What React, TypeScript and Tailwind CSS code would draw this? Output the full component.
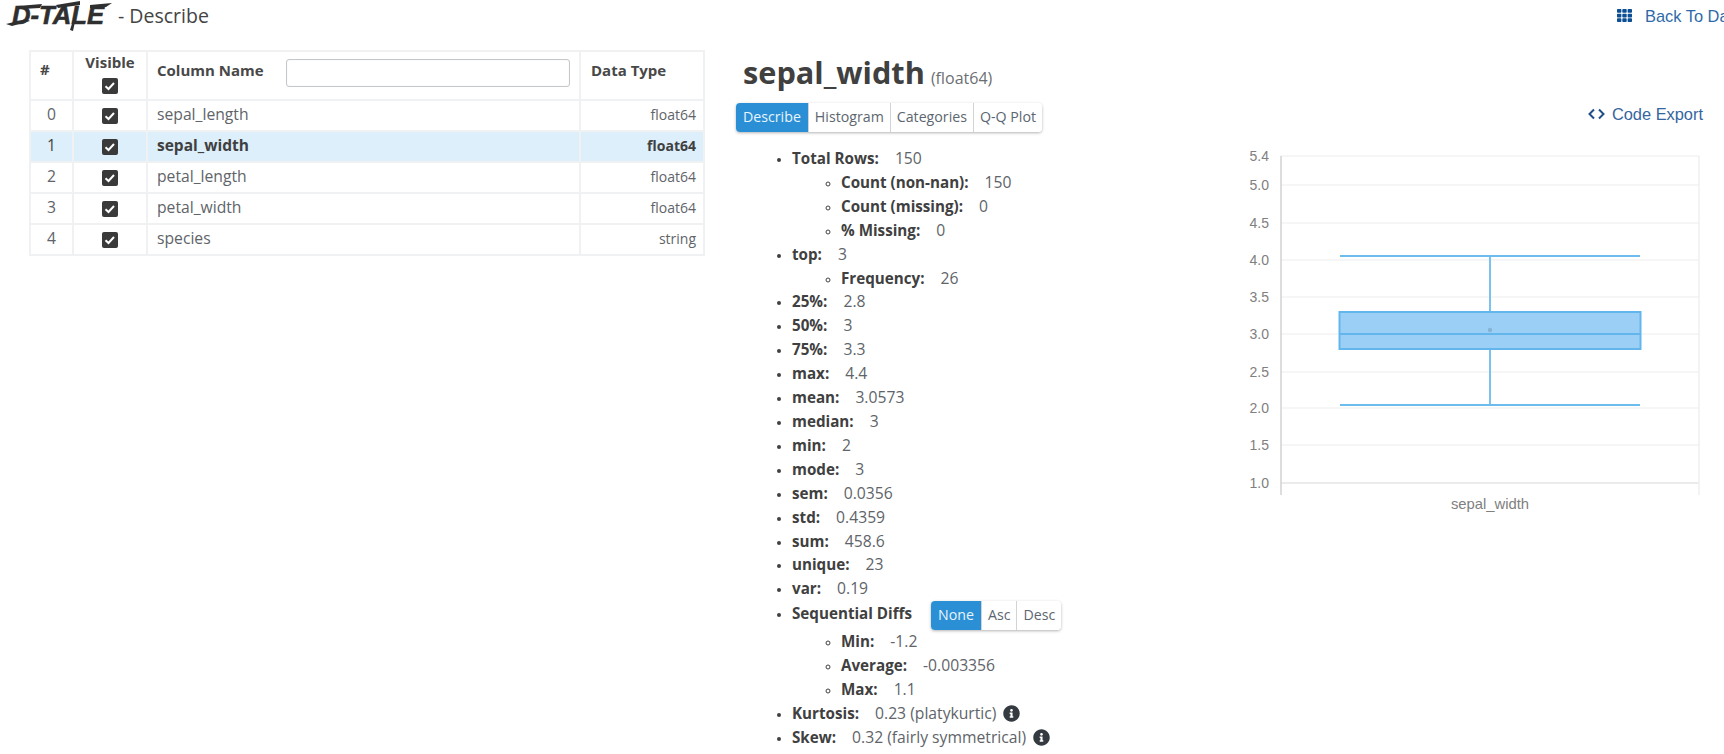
import { FaInfoCircle, FaTh } from "react-icons/fa";

const columns = [
  { name: "sepal_length", type: "float64" },
  { name: "sepal_width", type: "float64", selected: true },
  { name: "petal_length", type: "float64" },
  { name: "petal_width", type: "float64" },
  { name: "species", type: "string" },
];

const stats = [
  ["25%", "2.8"],
  ["50%", "3"],
  ["75%", "3.3"],
  ["max", "4.4"],
  ["mean", "3.0573"],
  ["median", "3"],
  ["min", "2"],
  ["mode", "3"],
  ["sem", "0.0356"],
  ["std", "0.4359"],
  ["sum", "458.6"],
  ["unique", "23"],
  ["var", "0.19"],
];

const ticks = [
  ["5.4", 156],
  ["5.0", 185],
  ["4.5", 223],
  ["4.0", 260],
  ["3.5", 297],
  ["3.0", 334],
  ["2.5", 372],
  ["2.0", 408],
  ["1.5", 445],
  ["1.0", 483],
] as const;

const Checkbox = () => (
  <span className="inline-flex w-4 h-4 items-center justify-center rounded-[2px] bg-[#3a3a3a] align-middle">
    <svg viewBox="0 0 16 16" className="w-4 h-4" fill="none" stroke="#fff" strokeWidth="2">
      <path d="M3.5 8.2l3 2.8 5.5-6" />
    </svg>
  </span>
);

const Stat = ({ label, value }: { label: string; value: string }) => (
  <>
    <strong className="font-bold text-[15.2px] text-[#404040]">{label}:</strong>
    <span className="ml-[16px]">{value}</span>
  </>
);

const ButtonGroup = ({ items, className }: { items: string[]; className?: string }) => (
  <div className={`inline-flex h-[29px] rounded-[4px] shadow-[0_1px_3px_rgba(0,0,0,0.3)] text-[14.2px] leading-[28px] ${className ?? ""}`}>
    {items.map((item, i) => (
      <span
        key={item}
        className={
          i === 0
            ? "px-[7px] rounded-l-[4px] bg-[#2a8fd4] text-[#e8f4fc]"
            : "px-[6px] border-l border-[#d0d4d8] text-[#5c6670] bg-white last:rounded-r-[4px]"
        }
      >
        {item}
      </span>
    ))}
  </div>
);

const Logo = () => (
  <svg width="106" height="32" viewBox="0 0 106 32" className="ml-[6px] -mt-[2px] shrink-0">
    <text
      x="6"
      y="25"
      textLength="92"
      lengthAdjust="spacingAndGlyphs"
      fontFamily="'Liberation Sans', sans-serif"
      fontWeight="700"
      fontStyle="italic"
      fontSize="25"
      fill="#2f2f2f"
      stroke="#2f2f2f"
      strokeWidth="0.6"
    >
      D-TALE
    </text>
    <g fill="#2f2f2f">
      <polygon points="0,25 20,20 24,22 6,27" />
      <polygon points="12,7 36,5 34,9 16,10" />
      <polygon points="50,6 74,2 74,6 52,9" />
      <polygon points="84,6 106,4 100,8 84,9" />
      <polygon points="64,31 68,18 70,18 67,32" />
    </g>
  </svg>
);

const BoxPlot = () => (
  <svg width="470" height="380" viewBox="1240 140 470 380" className="block">
    {ticks.map(([label, y]) => (
      <g key={label}>
        <line x1="1281" x2="1699" y1={y} y2={y} stroke={label === "1.0" ? "#d8d8d8" : "#eeeeee"} strokeWidth="1.2" />
        <text x="1269" y={y + 5} textAnchor="end" fontSize="14" fill="#808080" fontFamily="'Liberation Sans', sans-serif">
          {label}
        </text>
      </g>
    ))}
    <line x1="1281" x2="1281" y1="156" y2="495" stroke="#cfcfcf" strokeWidth="1.4" />
    <line x1="1699" x2="1699" y1="156" y2="495" stroke="#eeeeee" strokeWidth="1.4" />
    <g stroke="#6cbcee" strokeWidth="1.8">
      <line x1="1340" x2="1640" y1="256" y2="256" />
      <line x1="1340" x2="1640" y1="405" y2="405" />
      <line x1="1490" x2="1490" y1="256" y2="312" />
      <line x1="1490" x2="1490" y1="349" y2="405" />
    </g>
    <rect x="1339.5" y="312" width="301" height="37" fill="#9bcff5" stroke="#62b6ec" strokeWidth="2" />
    <line x1="1339" x2="1641" y1="334" y2="334" stroke="#62b6ec" strokeWidth="2.2" />
    <circle cx="1490" cy="330" r="2.2" fill="#85b3d6" />
    <text x="1490" y="509" textAnchor="middle" fontSize="14.8" fill="#808080" fontFamily="'Liberation Sans', sans-serif">
      sepal_width
    </text>
  </svg>
);

const App = () => {
  return (
    <div className="w-[1724px] h-[754px] overflow-hidden bg-white text-[#606469] font-['Open_Sans',sans-serif] text-[15.7px]">
      <header className="flex items-center justify-between h-[32px]">
        <div className="flex items-center">
          <Logo />
          <span className="ml-[6px] text-[19.5px] text-[#444]">- Describe</span>
        </div>
        <a className="flex items-center shrink-0 w-[108px] -mt-[1px] whitespace-nowrap text-[#2f6aa8] text-[16.4px] leading-[30px] font-['Liberation_Sans',sans-serif]">
          <FaTh className="w-[17px] h-[15px] shrink-0 text-[#0d4f94]" />
          <span className="ml-[12px]">Back To Data</span>
        </a>
      </header>

      <main className="flex pt-[18px]">
        <div className="w-[675px] ml-[29px] shrink-0">
          <table className="table-fixed border-collapse w-[674px]">
            <thead>
              <tr className="h-[49px] text-[15px]">
                <th className="w-[43px] border-2 border-[#f0f1f2] font-bold text-[#484848] text-left pl-[9px] pb-[12px] align-middle">#</th>
                <th className="w-[74px] border-2 border-[#f0f1f2] font-bold text-[#484848] text-center align-top leading-[24px]">
                  <div className="-mt-[2px]">Visible</div>
                  <div className="flex justify-center h-[20px] mt-[2px] items-center"><Checkbox /></div>
                </th>
                <th className="w-[433px] border-2 border-[#f0f1f2] font-bold text-[#484848] text-left align-top pt-[7px] pl-[9px] pr-[9px]">
                  <div className="flex items-start">
                    <span className="w-[129px] shrink-0">Column Name</span>
                    <div className="w-[286px] h-[28px] rounded-[3px] border border-[#c4c8cb] shadow-[inset_0_0_1px_rgba(0,0,0,0.15)]" />
                  </div>
                </th>
                <th className="w-[124px] border-2 border-[#f0f1f2] font-bold text-[#484848] text-left align-top pl-[10px] pt-[7px]">Data Type</th>
              </tr>
            </thead>
            <tbody>
              {columns.map((col, i) => {
                const cell = `border-2 border-[#f0f1f2] pb-[2px] ${col.selected ? "border-[#d2e6f3]" : ""}`;
                return (
                  <tr key={col.name} className={`h-[31px] ${col.selected ? "bg-[#dceffb] font-bold text-[15.5px] text-[#404040]" : ""}`}>
                    <td className={`${cell} text-center font-normal`}>{i}</td>
                    <td className={`${cell} text-center`}><Checkbox /></td>
                    <td className={`${cell} pl-[9px]`}>{col.name}</td>
                    <td className={`${cell} pr-[7px] text-right text-[14px]`}>{col.type}</td>
                  </tr>
                );
              })}
            </tbody>
          </table>
        </div>

        <section className="w-[492px] ml-[32px] shrink-0 mt-[4px]">
          <h1 className="ml-[7px] h-[37px] flex items-baseline leading-[37px] text-[#404040]">
            <span className="text-[30.7px] font-bold">sepal_width</span>
            <small className="ml-[6px] text-[16px] font-normal text-[#6b6f73]">(float64)</small>
          </h1>
          <ButtonGroup className="mt-[12px]" items={["Describe", "Histogram", "Categories", "Q-Q Plot"]} />

          <ul className="list-disc mt-[15px] pl-[56px] leading-[23.9px] marker:text-[#404040] marker:text-[12px]">
            <li>
              <Stat label="Total Rows" value="150" />
              <ul className="list-[circle] pl-[49px]">
                <li><Stat label="Count (non-nan)" value="150" /></li>
                <li><Stat label="Count (missing)" value="0" /></li>
                <li><Stat label="% Missing" value="0" /></li>
              </ul>
            </li>
            <li>
              <Stat label="top" value="3" />
              <ul className="list-[circle] pl-[49px]">
                <li><Stat label="Frequency" value="26" /></li>
              </ul>
            </li>
            {stats.map(([label, value]) => (
              <li key={label}><Stat label={label} value={value} /></li>
            ))}
            <li>
              <div className="flex items-center h-[29px]">
                <strong className="pb-[3px] font-bold text-[15.2px] text-[#404040]">Sequential Diffs</strong>
                <ButtonGroup className="ml-[19px] -mt-[1px]" items={["None", "Asc", "Desc"]} />
              </div>
              <ul className="list-[circle] pl-[49px]">
                <li><Stat label="Min" value="-1.2" /></li>
                <li><Stat label="Average" value="-0.003356" /></li>
                <li><Stat label="Max" value="1.1" /></li>
              </ul>
            </li>
            <li>
              <span className="flex items-center">
                <Stat label="Kurtosis" value="0.23 (platykurtic)" />
                <FaInfoCircle className="ml-[7px] w-[17px] h-[17px] text-[#343a40]" />
              </span>
            </li>
            <li>
              <span className="flex items-center">
                <Stat label="Skew" value="0.32 (fairly symmetrical)" />
                <FaInfoCircle className="ml-[7px] w-[17px] h-[17px] text-[#343a40]" />
              </span>
            </li>
          </ul>
        </section>

        <aside className="flex flex-col ml-[12px] -mt-[8px]">
          <a className="flex items-center justify-end h-[24px] mt-[60px] w-[463px] text-[16.4px] text-[#35659e] font-['Liberation_Sans',sans-serif]">
            <svg width="17" height="12" viewBox="0 0 17 12" fill="none" stroke="#1f4f86" strokeWidth="2" className="mr-[7px]">
              <path d="M6 1.5L1.5 6 6 10.5M11 1.5L15.5 6 11 10.5" />
            </svg>
            Code Export
          </a>
          <div className="mt-[14px]">
            <BoxPlot />
          </div>
        </aside>
      </main>
    </div>
  );
};

export default App;
